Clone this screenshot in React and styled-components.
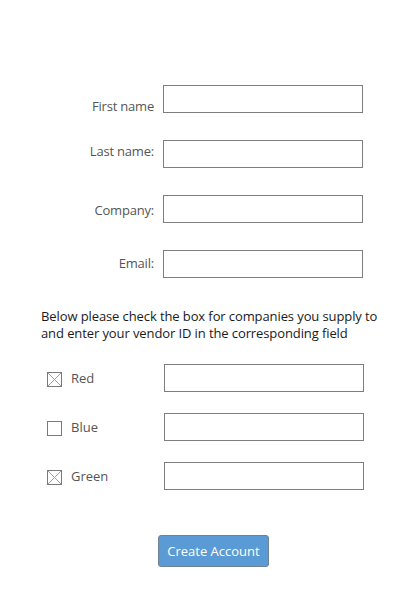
import React from 'react';
import styled, { createGlobalStyle } from 'styled-components';

const GlobalStyle = createGlobalStyle`
  body {
    margin: 0;
    background: #ffffff;
    font-family: "Open Sans", "Noto Sans", sans-serif;
  }
`;

const Page = styled.div`
  width: 415px;
  height: 608px;
  padding-top: 85px;
  box-sizing: border-box;
`;

const FormGrid = styled.div`
  display: grid;
  grid-template-columns: 154px 200px;
  grid-auto-rows: 28px;
  column-gap: 9px;
  row-gap: 27px;
  align-items: start;
`;

const Label = styled.label`
  text-align: right;
  font-size: 13px;
  line-height: 17px;
  color: #555555;
  letter-spacing: -0.2px;
  padding-top: ${p => p.$offset}px;
`;

const TextBox = styled.input`
  box-sizing: border-box;
  width: 200px;
  height: 28px;
  margin: 0;
  border: 1px solid #7f7f7f;
  border-radius: 0;
  outline: none;
  background: #ffffff;
`;

const Note = styled.p`
  margin: 30px 0 0 41px;
  font-size: 13px;
  line-height: 17px;
  letter-spacing: -0.1px;
  color: #1a1a1a;
`;

const VendorList = styled.div`
  display: flex;
  flex-direction: column;
  gap: 21px;
  margin-top: 22px;
`;

const VendorRow = styled.div`
  display: grid;
  grid-template-columns: 47px 24px 93px 200px;
  align-items: center;
`;

const Box = styled.span`
  grid-column: 2;
  box-sizing: border-box;
  width: 15px;
  height: 15px;
  border: 1px solid #7a7a7a;
  margin-top: 3px;
  display: flex;
`;

const VendorName = styled.span`
  font-size: 13px;
  color: #555555;
`;

const Footer = styled.div`
  padding: 45px 0 0 158px;
`;

const Button = styled.button`
  box-sizing: border-box;
  width: 111px;
  height: 32px;
  background: #5b9bd5;
  color: #ffffff;
  border: 1px solid #6f8296;
  border-radius: 3px;
  font-family: inherit;
  font-size: 13px;
  padding: 0;
  cursor: pointer;
`;

const CheckBox = ({ checked }) => (
  <Box>
    {checked && (
      <svg width="13" height="13" viewBox="0 0 13 13">
        <path d="M0 0 L13 13 M13 0 L0 13" stroke="#a0a0a0" strokeWidth="1" />
      </svg>
    )}
  </Box>
);

const fields = [
  { label: 'First name', offset: 13 },
  { label: 'Last name:', offset: 3 },
  { label: 'Company:', offset: 7 },
  { label: 'Email:', offset: 5 },
];

const vendors = [
  { name: 'Red', checked: true },
  { name: 'Blue', checked: false },
  { name: 'Green', checked: true },
];

export default function App() {
  return (
    <Page>
      <GlobalStyle />
      <FormGrid>
        {fields.map(f => (
          <React.Fragment key={f.label}>
            <Label $offset={f.offset}>{f.label}</Label>
            <TextBox type="text" />
          </React.Fragment>
        ))}
      </FormGrid>
      <Note>
        Below please check the box for companies you supply to
        <br />
        and enter your vendor ID in the corresponding field
      </Note>
      <VendorList>
        {vendors.map(v => (
          <VendorRow key={v.name}>
            <CheckBox checked={v.checked} />
            <VendorName>{v.name}</VendorName>
            <TextBox type="text" />
          </VendorRow>
        ))}
      </VendorList>
      <Footer>
        <Button>Create Account</Button>
      </Footer>
    </Page>
  );
}
